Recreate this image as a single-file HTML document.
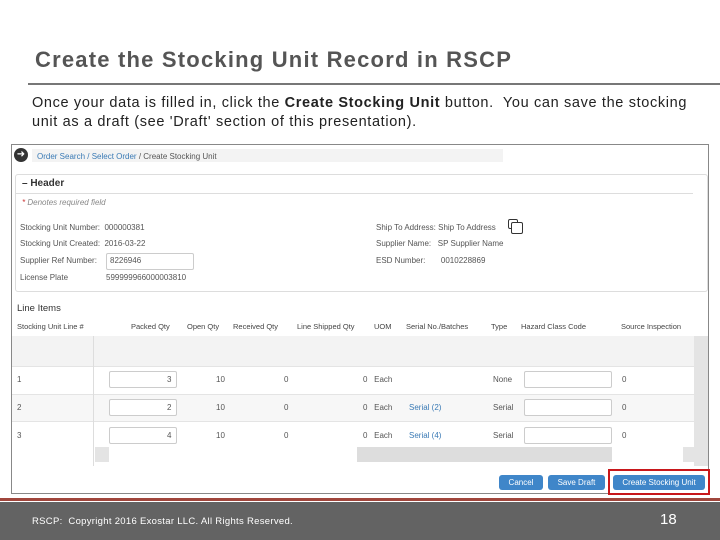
<!DOCTYPE html>
<html><head><style>
*{margin:0;padding:0;box-sizing:border-box}
body{width:720px;height:540px;position:relative;background:#fff;font-family:"Liberation Sans",sans-serif;overflow:hidden}
.a{position:absolute;white-space:nowrap}
.s{font-size:8px;color:#555}
.h{font-size:7.5px;color:#444;top:322px}
.lk{color:#3a7ab5}
.in{position:absolute;border:1px solid #ccc;border-radius:2px;background:#fff;height:17px}
.btn{position:absolute;background:#3f86c9;color:#fff;font-size:8px;border-radius:3px;text-align:center;line-height:15px;height:15px;top:475px}
</style></head><body>
<div class="a" style="left:35px;top:47px;font-size:22px;font-weight:bold;color:#555;letter-spacing:1.2px">Create the Stocking Unit Record in RSCP</div>
<div class="a" style="left:28px;top:83px;width:692px;height:2px;background:#777"></div>
<div class="a" style="left:32px;top:94px;font-size:14.5px;color:#222;line-height:19px;letter-spacing:0.65px">Once your data is filled in, click the <b>Create Stocking Unit</b> button.&nbsp; You can save the stocking<br>unit as a draft (see 'Draft' section of this presentation).</div>

<div class="a" style="left:11px;top:144px;width:698px;height:350px;border:1px solid #888;background:#fff"></div>
<div class="a" style="left:14px;top:148px;width:14px;height:14px;border-radius:50%;background:#333;color:#fff;font-size:10px;line-height:14px;text-align:center">➜</div>
<div class="a" style="left:32px;top:149px;width:471px;height:13px;background:#f3f3f3"></div>
<div class="a s" style="left:37px;top:152px"><span class="lk">Order Search / Select Order</span> / Create Stocking Unit</div>
<div class="a" style="left:15px;top:174px;width:693px;height:118px;border:1px solid #ddd;border-radius:3px"></div>
<div class="a" style="left:15px;top:193px;width:678px;height:1px;background:#ddd"></div>
<div class="a" style="left:22px;top:178px;font-size:10px;font-weight:bold;color:#333">– Header</div>
<div class="a" style="left:22px;top:198px;font-size:8px;color:#888;font-style:italic"><span style="color:#c33">*</span> Denotes required field</div>
<div class="a s" style="left:20px;top:223px">Stocking Unit Number:&nbsp; 000000381</div>
<div class="a s" style="left:20px;top:239px">Stocking Unit Created:&nbsp; 2016-03-22</div>
<div class="a s" style="left:20px;top:256px">Supplier Ref Number:</div>
<div class="in" style="left:106px;top:253px;width:88px"></div>
<div class="a s" style="left:110px;top:256px">8226946</div>
<div class="a s" style="left:20px;top:273px">License Plate</div>
<div class="a s" style="left:106px;top:273px">599999966000003810</div>
<div class="a s" style="left:376px;top:223px">Ship To Address: Ship To Address</div>
<div class="a" style="left:508px;top:219px;width:10px;height:10px;border:1.5px solid #333;border-radius:2px"></div>
<div class="a" style="left:511px;top:222px;width:12px;height:12px;border:1.5px solid #333;border-radius:2px;background:#fff"></div>
<div class="a s" style="left:376px;top:239px">Supplier Name:&nbsp;&nbsp; SP Supplier Name</div>
<div class="a s" style="left:376px;top:256px">ESD Number:&nbsp;&nbsp;&nbsp;&nbsp;&nbsp;&nbsp; 0010228869</div>
<div class="a" style="left:17px;top:303px;font-size:9.5px;color:#333">Line Items</div>
<div class="a h" style="left:17px">Stocking Unit Line #</div>
<div class="a h" style="left:131px">Packed Qty</div>
<div class="a h" style="left:187px">Open Qty</div>
<div class="a h" style="left:233px">Received Qty</div>
<div class="a h" style="left:297px">Line Shipped Qty</div>
<div class="a h" style="left:374px">UOM</div>
<div class="a h" style="left:406px">Serial No./Batches</div>
<div class="a h" style="left:491px">Type</div>
<div class="a h" style="left:521px">Hazard Class Code</div>
<div class="a h" style="left:621px">Source Inspection</div>
<div class="a" style="left:12px;top:336px;width:682px;height:30px;background:#f3f3f3"></div>
<div class="a" style="left:694px;top:336px;width:14px;height:130px;background:#e4e4e4"></div>
<div class="a" style="left:12px;top:366px;width:682px;height:28px;border-top:1px solid #e4e4e4"></div>
<div class="a" style="left:12px;top:394px;width:682px;height:28px;background:#f7f7f7;border-top:1px solid #e4e4e4;border-bottom:1px solid #e4e4e4"></div>
<div class="a" style="left:93px;top:336px;width:1px;height:130px;background:#ddd"></div>
<div class="a" style="left:95px;top:447px;width:14px;height:15px;background:#e4e4e4"></div>
<div class="a" style="left:357px;top:447px;width:255px;height:15px;background:#ddd"></div>
<div class="a" style="left:683px;top:447px;width:14px;height:15px;background:#e4e4e4"></div>

<div class="in" style="left:109px;top:371px;width:68px"></div><div class="in" style="left:524px;top:371px;width:88px"></div>
<div class="in" style="left:109px;top:399px;width:68px"></div><div class="in" style="left:524px;top:399px;width:88px"></div>
<div class="in" style="left:109px;top:427px;width:68px"></div><div class="in" style="left:524px;top:427px;width:88px"></div>
<div class="a s" style="left:17px;top:375px">1</div><div class="a s" style="left:167px;top:375px">3</div><div class="a s" style="left:216px;top:375px">10</div><div class="a s" style="left:284px;top:375px">0</div><div class="a s" style="left:363px;top:375px">0&nbsp;&nbsp; Each</div><div class="a s" style="left:493px;top:375px">None</div><div class="a s" style="left:622px;top:375px">0</div>
<div class="a s" style="left:17px;top:403px">2</div><div class="a s" style="left:167px;top:403px">2</div><div class="a s" style="left:216px;top:403px">10</div><div class="a s" style="left:284px;top:403px">0</div><div class="a s" style="left:363px;top:403px">0&nbsp;&nbsp; Each</div><div class="a s lk" style="left:409px;top:403px">Serial (2)</div><div class="a s" style="left:493px;top:403px">Serial</div><div class="a s" style="left:622px;top:403px">0</div>
<div class="a s" style="left:17px;top:431px">3</div><div class="a s" style="left:167px;top:431px">4</div><div class="a s" style="left:216px;top:431px">10</div><div class="a s" style="left:284px;top:431px">0</div><div class="a s" style="left:363px;top:431px">0&nbsp;&nbsp; Each</div><div class="a s lk" style="left:409px;top:431px">Serial (4)</div><div class="a s" style="left:493px;top:431px">Serial</div><div class="a s" style="left:622px;top:431px">0</div>

<div class="btn" style="left:499px;width:44px">Cancel</div>
<div class="btn" style="left:548px;width:57px">Save Draft</div>
<div class="btn" style="left:613px;width:92px">Create Stocking Unit</div>
<div class="a" style="left:608px;top:469px;width:102px;height:26px;border:2.5px solid #c8171b"></div>

<div class="a" style="left:0;top:498px;width:720px;height:3px;background:#a0463c"></div>
<div class="a" style="left:0;top:502px;width:720px;height:38px;background:#636363"></div>
<div class="a" style="left:32px;top:516px;font-size:9.5px;color:#fff;letter-spacing:0.3px">RSCP:&nbsp; Copyright 2016 Exostar LLC. All Rights Reserved.</div>
<div class="a" style="left:660px;top:511px;font-size:15px;color:#fff">18</div>
</body></html>
